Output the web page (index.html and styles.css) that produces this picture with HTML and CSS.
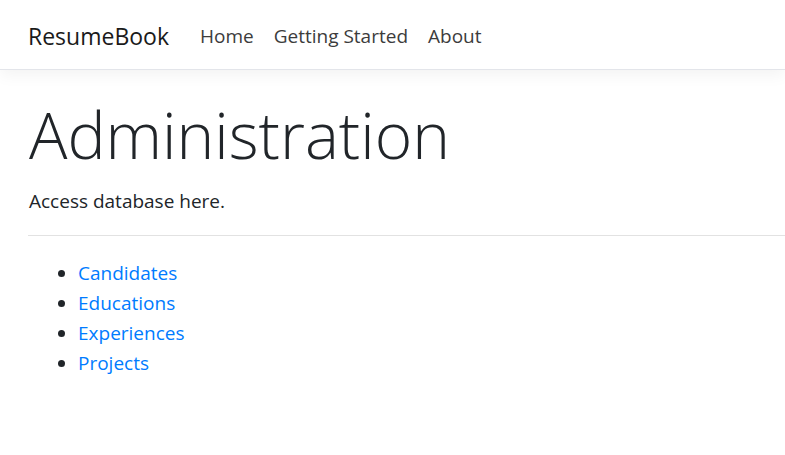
FILE: index.html
```html
<!DOCTYPE html>
<html lang="en">
<head>
<meta charset="utf-8">
<title>Administration - ResumeBook</title>
<link rel="stylesheet" href="styles.css">
</head>
<body>
<header class="navbar">
  <a class="brand" href="#">ResumeBook</a>
  <nav class="nav">
    <a class="nav-link" href="#">Home</a>
    <a class="nav-link" href="#">Getting Started</a>
    <a class="nav-link" href="#">About</a>
  </nav>
</header>
<main class="content">
  <h1 class="display">Administration</h1>
  <p class="lead">Access database here.</p>
  <hr class="divider">
  <ul class="links">
    <li><a href="#">Candidates</a></li>
    <li><a href="#">Educations</a></li>
    <li><a href="#">Experiences</a></li>
    <li><a href="#">Projects</a></li>
  </ul>
</main>
</body>
</html>
```
FILE: styles.css
```css
html, body {
  margin: 0;
  padding: 0;
  background: #fff;
}
body {
  font-family: "Open Sans", "Noto Sans", sans-serif;
  font-size: 19px;
  line-height: 30px;
  color: #212529;
}
a {
  text-decoration: none;
}
.navbar {
  height: 70px;
  display: flex;
  align-items: center;
  padding: 2px 28px 0 28px;
  border-bottom: 1px solid #e3e5ea;
  box-shadow: 0 5px 15px rgba(0, 0, 0, 0.05);
  box-sizing: border-box;
}
.brand {
  font-size: 23px;
  color: #1a1a1a;
  margin-right: 21px;
}
.nav {
  display: flex;
}
.nav-link {
  color: #3c3c3c;
  padding: 0 10px;
}
.content {
  padding: 23px 0 0 29px;
}
.display {
  font-size: 64px;
  font-weight: 300;
  line-height: 84px;
  margin: 0 0 9px 0;
  color: #212529;
}
.lead {
  margin: 0;
}
.divider {
  border: 0;
  border-top: 1px solid #e2e2e2;
  margin: 19px 0 22px -1px;
}
.links {
  margin: 0;
  padding-left: 49px;
}
.links a {
  color: #007bff;
}
```
